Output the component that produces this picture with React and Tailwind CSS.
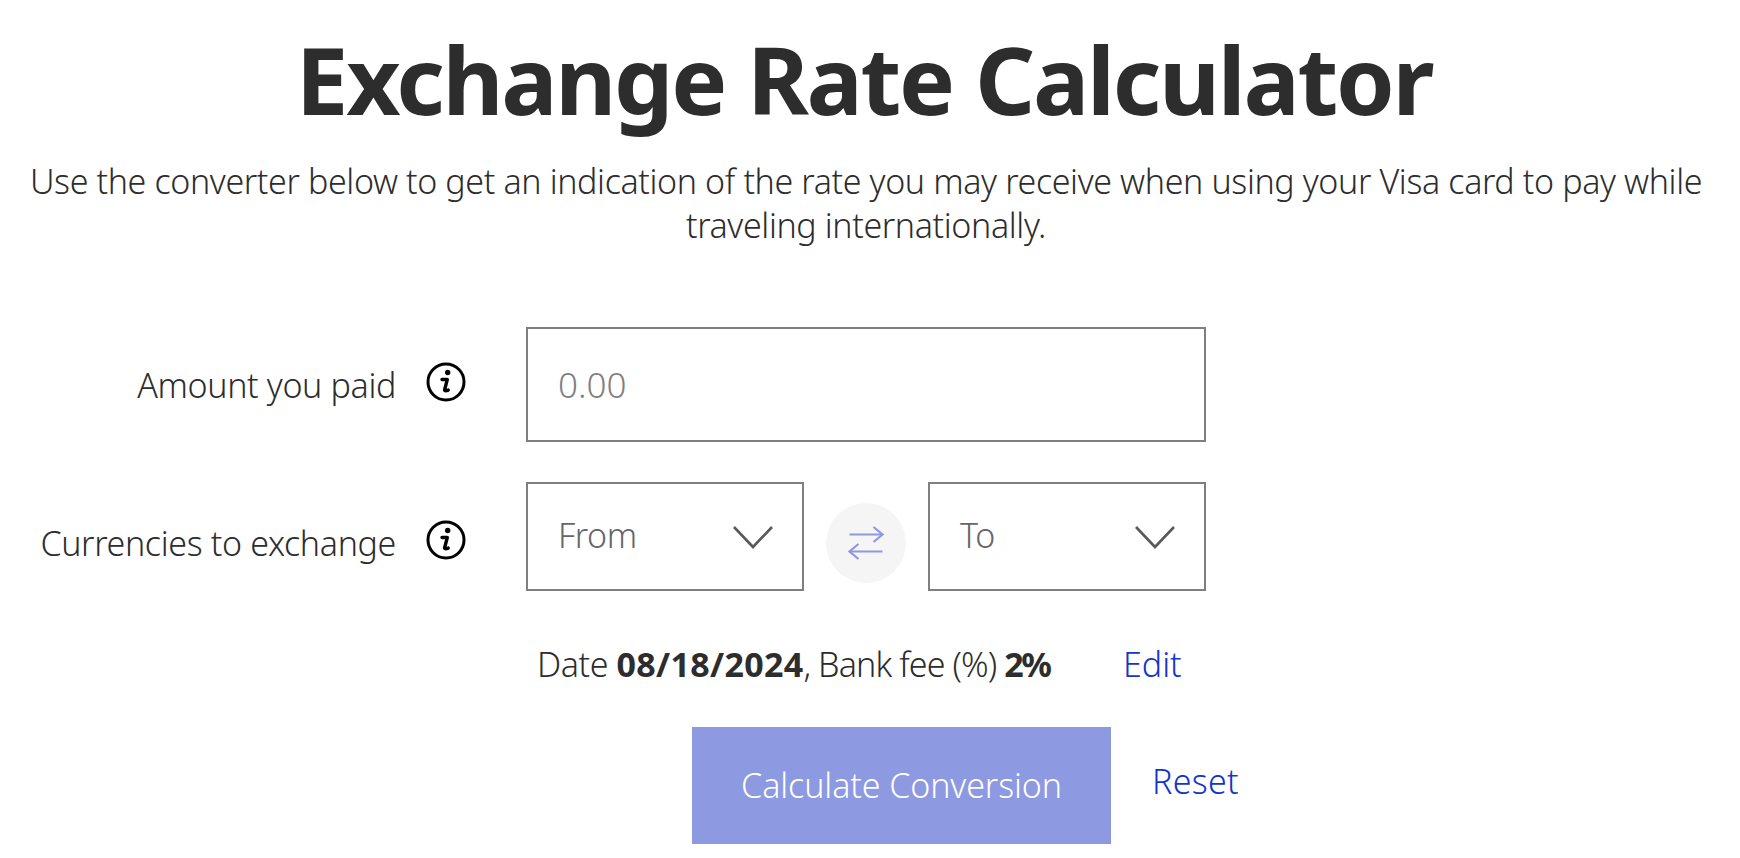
import React from "react";

const InfoIcon = () => (
  <svg width="40" height="40" viewBox="0 0 40 40" fill="none" className="shrink-0">
    <circle cx="20" cy="20" r="18" stroke="#000" strokeWidth="3" />
    <circle cx="21.7" cy="10.5" r="2.7" fill="#000" />
    <path d="M16 17.5h5.3l-2.6 10c-.3 1.2.6 1.8 3.5.6" stroke="#000" strokeWidth="3.4" strokeLinecap="round" strokeLinejoin="round" />
  </svg>
);

const Chevron = () => (
  <svg width="40" height="24" viewBox="0 0 40 24" fill="none">
    <path d="M1 2l19 20L39 2" stroke="#595959" strokeWidth="2.6" />
  </svg>
);

const SwapIcon = () => (
  <svg width="36" height="36" viewBox="0 0 36 36" fill="none" stroke="#8e99e0" strokeWidth="2.2">
    <path d="M1.5 9.5h33" />
    <path d="M25.5 2l9 7.5-9 7.5" />
    <path d="M34.5 26.5h-33" />
    <path d="M10.5 19l-9 7.5 9 7.5" />
  </svg>
);

const Select = ({ label }) => (
  <button className="w-[278px] h-[109px] border-2 border-[#7f7f7f] bg-white flex items-center justify-between pl-[30px] pr-[29px] text-[34px] tracking-[-0.4px] text-[#666666] font-light">
    <span className="-mt-[2px]">{label}</span>
    <Chevron />
  </button>
);

export default function App() {
  return (
    <div className="w-[1740px] h-[858px] bg-white overflow-hidden text-[#2d2d2d] font-['Noto_Sans',sans-serif]">
      <h1 className="text-center text-[94px] leading-[130px] font-bold tracking-[-2.3px] pt-[14px] pr-[12px]">
        Exchange Rate Calculator
      </h1>
      <p className="mx-auto w-[1700px] mt-[15px] pr-[8px] text-center text-[34px] tracking-[-0.37px] leading-[44px] font-light">
        Use the converter below to get an indication of the rate you may receive when using your Visa card to pay while traveling internationally.
      </p>

      <div className="flex items-center mt-[80px] h-[115px]">
        <label className="w-[396px] mt-[2px] text-right text-[34px] tracking-[-0.35px] font-light">Amount you paid</label>
        <div className="ml-[30px] -mt-[6px]"><InfoIcon /></div>
        <input
          placeholder="0.00"
          className="ml-[60px] w-[680px] h-[115px] border-2 border-[#7f7f7f] pl-[30px] text-[35px] font-light placeholder:text-[#7f7f7f] outline-none"
        />
      </div>

      <div className="flex items-center mt-[40px] h-[109px]">
        <label className="w-[396px] mt-[14px] text-right text-[34px] tracking-[-0.35px] font-light">Currencies to exchange</label>
        <div className="ml-[30px] mt-[6px]"><InfoIcon /></div>
        <div className="ml-[60px] w-[680px] flex items-center justify-between">
          <Select label="From" />
          <div className="w-[80px] h-[80px] mt-[12px] rounded-full bg-[#f5f5f5] flex items-center justify-center">
            <SwapIcon />
          </div>
          <Select label="To" />
        </div>
      </div>

      <div className="flex items-center mt-[51px] pl-[537px] text-[34px] tracking-[-0.9px] font-light leading-[44px]">
        <span className="w-[586px]">
          <span className="tracking-[-0.4px]">Date </span>
          <b className="font-bold tracking-[0.3px]">08/18/2024</b>, Bank fee (%) <b className="font-bold tracking-[-2.5px]">2%</b>
        </span>
        <a className="text-[#1434cb] tracking-[0px]">Edit</a>
      </div>

      <div className="flex items-center mt-[41px] pl-[692px]">
        <button className="w-[419px] h-[117px] bg-[#8d99e1] text-white text-[34px] tracking-[-0.1px] font-light">
          Calculate Conversion
        </button>
        <a className="ml-[41px] -mt-[8px] text-[34px] tracking-[0.3px] font-light text-[#1434cb]">Reset</a>
      </div>
    </div>
  );
}
